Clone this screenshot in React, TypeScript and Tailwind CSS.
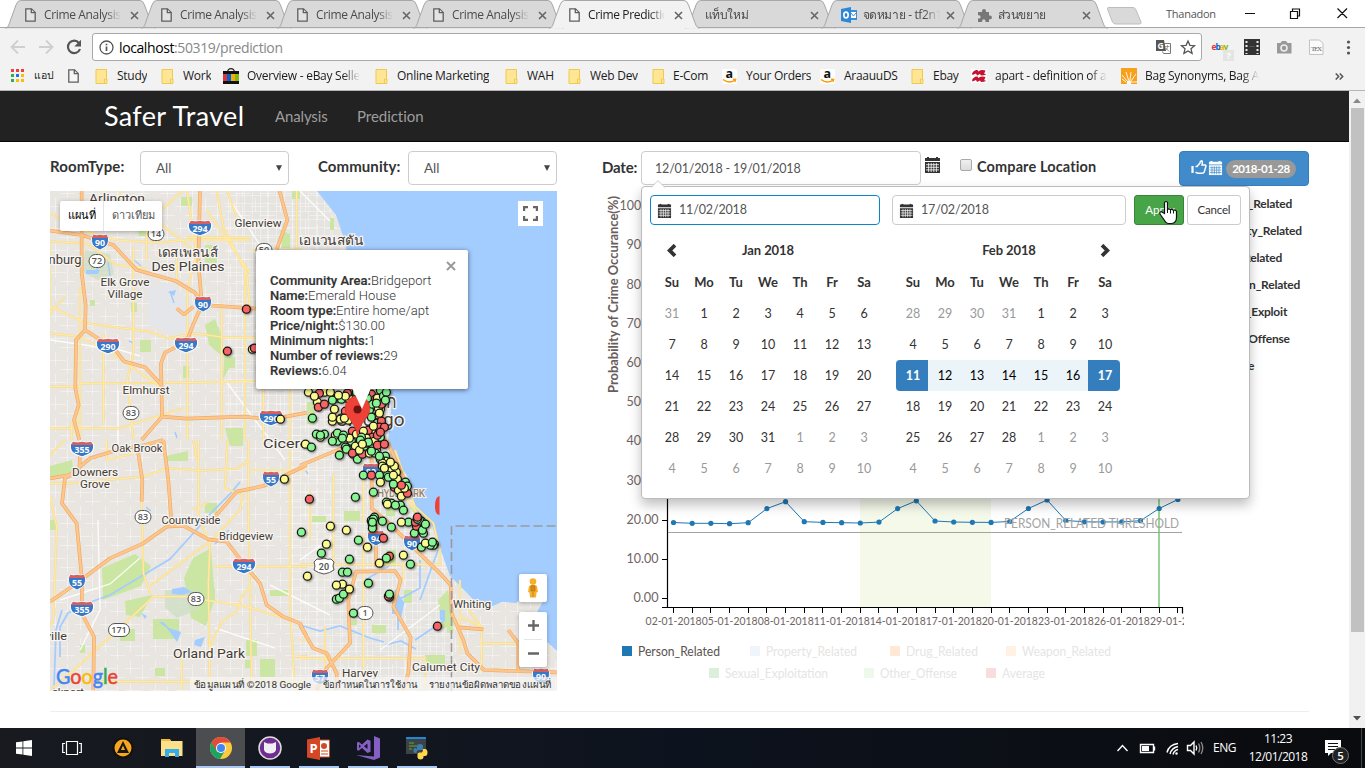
import React from "react";

/* ---------- small shared icons ---------- */

const PageIcon = ({ className = "" }: { className?: string }) => (
  <svg width="11" height="14" viewBox="0 0 11 14" className={className} fill="#fff" fillOpacity=".3" stroke="#5f5f5f" strokeWidth="1.3">
    <path d="M.8.8h5.7l3.7 3.7v8.7H.8z" />
    <path d="M6.3.8v3.9h3.9" />
  </svg>
);

const FolderIcon = () => (
  <svg width="13" height="15" viewBox="0 0 13 15" className="shrink-0">
    <path d="M1 .5h10.5v14H1z" fill="#ffe694" stroke="#f0c94e" />
    <path d="M9.5 10h2.5v4.5H9.5z" fill="#ffe694" stroke="#f0c94e" />
  </svg>
);

const AmazonIcon = () => (
  <svg width="15" height="15" viewBox="0 0 15 15" className="shrink-0">
    <rect width="15" height="15" rx="2" fill="#fff" />
    <text x="7.2" y="9.3" fontSize="12.5" fontWeight="700" textAnchor="middle" fontFamily="Open Sans, sans-serif" fill="#111">a</text>
    <path d="M1 10.5q6 4.5 11.5.8M11 10.2l2.6.2-.7 2.3" stroke="#f90" strokeWidth="1.5" fill="none" />
  </svg>
);

const CalIcon = ({ color = "#333" }: { color?: string }) => (
  <svg width="15" height="16" viewBox="0 0 15 16" className="shrink-0">
    <path fill={color} d="M0 1h2V0h2v1h7V0h2v1h2v3H0zM0 5h15v11H0z" />
    <path stroke={color === "#fff" ? "#428bca" : "#fff"} strokeWidth=".8" d="M1 7.7h13M1 10.3h13M1 12.9h13M3.6 6v9M6.2 6v9M8.8 6v9M11.4 6v9" />
  </svg>
);

/* ---------- browser chrome ---------- */

type Tab = { title: string; icon: "page" | "outlook" | "puzzle" | "none"; active?: boolean };
const tabs: Tab[] = [
  { title: "Crime Analysis", icon: "page" },
  { title: "Crime Analysis", icon: "page" },
  { title: "Crime Analysis", icon: "page" },
  { title: "Crime Analysis", icon: "page" },
  { title: "Crime Prediction", icon: "page", active: true },
  { title: "แท็บใหม่", icon: "none" },
  { title: "จดหมาย - tf2n1", icon: "outlook" },
  { title: "ส่วนขยาย", icon: "puzzle" },
];

const TabIcon = ({ icon }: { icon: Tab["icon"] }) => {
  if (icon === "page") return <PageIcon className="mr-[8px] shrink-0" />;
  if (icon === "outlook")
    return (
      <svg width="16" height="16" viewBox="0 0 16 16" className="mr-[6px] shrink-0">
        <path d="M8 3h8v10H8z" fill="#3a8fd6" />
        <path d="M10 5h5v6h-5z" fill="#fff" />
        <path d="M10 6l2.4 3L16 5" stroke="#3a8fd6" fill="none" />
        <path d="M0 2l10-2v16L0 14z" fill="#2b88d8" />
        <ellipse cx="5" cy="8" rx="2.2" ry="2.9" fill="none" stroke="#fff" strokeWidth="1.6" />
      </svg>
    );
  if (icon === "puzzle")
    return (
      <svg width="15" height="15" viewBox="0 0 15 15" className="mr-[6px] shrink-0">
        <path fill="#777" d="M1 4h4V3a2 2 0 1 1 4 0v1h3v3.500h1a1.900 1.900 0 1 1 0 3.800h-1V14H8.500v-1a1.700 1.700 0 1 0-3.400 0v1H1v-3.500h1a1.600 1.600 0 1 0 0-3.200H1z" />
      </svg>
    );
  return null;
};

const TabStrip = () => (
  <div className="relative flex h-[28px] shrink-0 border-b border-[#a7a7a7] bg-white pl-[5px]">
    {tabs.map((t, i) => (
      <div key={i} className={`relative -mr-[14px] flex h-[28px] w-[150px] shrink-0 items-center ${t.icon === "page" ? "pl-[20px]" : "pl-[19.500px]"} ${t.active ? "z-10" : ""}`}>
        <svg className="absolute left-0 top-0" width="151" height="29" viewBox="0 0 151 29">
          <path d="M.5 28.500C4 27 4 24 5.500 20L11 5Q12.500.5 15.500.5H135Q138 .5 139.500 5l5.500 15c1.500 4 2 7 5.500 8.500" fill={t.active ? "#f2f2f2" : "#d9d9d9"} stroke="#a7a7a7" />
          {!t.active && <path d="M0 27.500h151" stroke="#a7a7a7" />}
        </svg>
        <div className="relative flex h-full w-full items-center pt-[2px]">
          <TabIcon icon={t.icon} />
          <span className={`w-[77px] overflow-hidden whitespace-nowrap text-[12px] tracking-[-0.350px] [mask-image:linear-gradient(to_right,#000_80%,transparent)] ${t.active ? "text-[#222]" : "text-[#4c4c4c]"}`}>{t.title}</span>
          <svg className="absolute left-[105px] top-[11px]" width="9" height="9" viewBox="0 0 9 9">
            <path d="M1 1l7 7M8 1L1 8" stroke="#666" strokeWidth="1.600" />
          </svg>
        </div>
      </div>
    ))}
    <svg className="ml-[14px] mt-[7px]" width="36" height="18" viewBox="0 0 36 18">
      <path d="M1 .5h25q2 0 3 2.500l5 12q.5 2-1.500 2H9q-2.500 0-3.500-2L.8 3Q0 .5 1 .5z" fill="#d9d9d9" stroke="#bdbdbd" />
    </svg>
    <span className="absolute left-[1166px] top-[6px] text-[11px] leading-[16px] tracking-[-0.250px] text-[#555]">Thanadon</span>
    <svg className="absolute left-[1244px] top-[5px]" width="105" height="18" viewBox="0 0 105 18" fill="none" stroke="#111" strokeWidth="1.200">
      <path d="M1 8.500h10M46.500 6.500h7v7h-7zM48.500 6v-2h7v7h-2M93.500 3.500l9.500 9.500M103 3.500L93.500 13" />
    </svg>
  </div>
);

const Toolbar = () => (
  <div className="flex h-[38px] shrink-0 items-center bg-[#f2f2f2]">
    <svg width="92" height="38" viewBox="0 28 92 38" fill="none" strokeWidth="1.800">
      <path d="M25 47H12M18 40.500L11.500 47l6.500 6.500M39 47h13M46 40.500l6.500 6.500-6.500 6.500" stroke="#cfcfcf" />
      <path d="M79 43a6.200 6.200 0 1 0 1 6" stroke="#555" strokeWidth="2.200" />
      <path d="M81 39.800v6.700h-6.700z" fill="#555" />
    </svg>
    <div className="flex h-[28px] w-[1110px] items-center rounded-[3px] border border-[#a9a9a9] bg-white pl-[6px]">
      <svg width="15" height="15" viewBox="0 0 15 15" fill="none" stroke="#555" strokeWidth="1.300">
        <circle cx="7.500" cy="7.500" r="6.500" />
        <path d="M7.500 6.500v4.500M7.500 3.700v1.600" strokeWidth="1.700" />
      </svg>
      <span className="ml-[5px] text-[14px] tracking-[-0.400px] text-[#888]"><span className="text-black">localhost</span>:50319/prediction</span>
      <svg className="ml-auto" width="50" height="28" viewBox="1150 33 50 28">
        <path d="M1163.500 43.500h6v10h-7l-1-2" fill="#fff" stroke="#777" />
        <path d="M1164 46.500h4.500M1166.500 45v1.500q0 3-2.500 4.500M1165 48l3 3.500" stroke="#888" fill="none" strokeWidth=".8" />
        <path d="M1155 40h8l2 11h-10z" fill="#555" />
        <text x="1159.500" y="48.500" fontSize="8.500" fontWeight="700" textAnchor="middle" fill="#fff">G</text>
        <path d="M1187 41l1.900 4.300 4.600.4-3.500 3.100 1.100 4.600-4.100-2.500-4.100 2.500 1.100-4.600-3.500-3.100 4.600-.4z" fill="none" stroke="#555" strokeWidth="1.300" />
      </svg>
    </div>
    <svg width="163" height="38" viewBox="1202 28 163 38">
      <g fontFamily="Open Sans, sans-serif" fontWeight="700" fontSize="8.500">
        <text x="1211.500" y="50" fill="#e53238">e</text><text x="1215.500" y="50" fill="#0064d2">b</text><text x="1219.500" y="50" fill="#f5af02">a</text><text x="1223.500" y="50" fill="#86b817">y</text>
        <rect x="1223" y="50" width="11" height="11" fill="#e4e4e4" />
        <text x="1226.500" y="58.500" fill="#fff" fontSize="9">?</text>
      </g>
      <rect x="1244" y="39" width="16" height="16" fill="#333" />
      <path d="M1246.500 41v13M1257.500 41v13" stroke="#eee" strokeWidth="2" strokeDasharray="2 2" />
      <path d="M1249.500 46.500h5" stroke="#555" />
      <path d="M1277 43h3.500l1.500-2h4l1.500 2h4v10.500H1277z" fill="#999" />
      <circle cx="1284" cy="48" r="3" fill="none" stroke="#eee" strokeWidth="1.600" />
      <path d="M1309.500 40h10l3.500 3.500V54.500h-13.500z" fill="#fafafa" stroke="#c2c2c2" />
      <text x="1311" y="51" fontSize="7" fontFamily="Liberation Serif, serif" fill="#666" textLength="11">TEX</text>
      <g fill="#555"><circle cx="1348.500" cy="42" r="1.600" /><circle cx="1348.500" cy="47.500" r="1.600" /><circle cx="1348.500" cy="53" r="1.600" /></g>
    </svg>
  </div>
);

const Bookmark = ({ icon, label, width, fade }: { icon: React.ReactNode; label: string; width: string; fade?: boolean }) => (
  <div className={`flex shrink-0 items-center ${width}`}>
    <span className="flex w-[21px] shrink-0">{icon}</span>
    <span className={`overflow-hidden whitespace-nowrap text-[12px] tracking-[-0.270px] text-[#1c1c1c] ${fade ? "[mask-image:linear-gradient(to_right,#000_85%,transparent)]" : ""}`}>{label}</span>
  </div>
);

const Bookmarks = () => (
  <div className="flex h-[25px] shrink-0 items-center border-b border-[#b6b4b6] bg-[#f2f2f2] pb-[4px] pl-[11px]">
    <svg width="23" height="14" viewBox="0 0 23 14" className="shrink-0">
      <path fill="#ea4335" d="M0 0h3v3H0zM5 0h3v3H5zM10 0h3v3h-3z" />
      <path fill="#34a853" d="M0 5h3v3H0zM0 10h3v3H0z" /><path fill="#1a73e8" d="M5 5h3v3H5z" />
      <path fill="#fbbc05" d="M10 5h3v3h-3zM5 10h3v3H5zM10 10h3v3h-3z" />
    </svg>
    <span className="w-[34px] text-[10.500px] text-[#222]">แอป</span>
    <PageIcon className="mr-[16px]" />
    <Bookmark icon={<FolderIcon />} label="Study" width="w-[66px] [&>span:first-child]:w-[22px]" />
    <Bookmark icon={<FolderIcon />} label="Work" width="w-[62px] [&>span:first-child]:w-[22px]" />
    <Bookmark
      icon={<svg width="16" height="16" viewBox="0 0 16 16"><path d="M4.500 4Q5 .7 8 .7T11.500 4" fill="none" stroke="#222" strokeWidth="1.200" /><path d="M0 3h16v13H0z" fill="#111" /><path d="M0 6h4v7H0z" fill="#e53238" /><path d="M4 6h4v7H4z" fill="#0064d2" /><path d="M8 6h4v7H8z" fill="#f5af02" /><path d="M12 6h4v7h-4z" fill="#86b817" /></svg>}
      label="Overview - eBay Seller" width="w-[137px] [&>span:first-child]:w-[24px]" fade />
    <div className="w-[15px]" />
    <Bookmark icon={<FolderIcon />} label="Online Marketing" width="w-[130px] [&>span:first-child]:w-[22px]" />
    <Bookmark icon={<FolderIcon />} label="WAH" width="w-[63px] [&>span:first-child]:w-[22px]" />
    <Bookmark icon={<FolderIcon />} label="Web Dev" width="w-[84px] [&>span:first-child]:w-[22px]" />
    <Bookmark icon={<FolderIcon />} label="E-Com" width="w-[70px]" />
    <Bookmark icon={<AmazonIcon />} label="Your Orders" width="w-[98px] [&>span:first-child]:w-[24px]" />
    <Bookmark icon={<AmazonIcon />} label="AraauuDS" width="w-[91px] [&>span:first-child]:w-[24px]" />
    <Bookmark icon={<FolderIcon />} label="Ebay" width="w-[60px] [&>span:first-child]:w-[22px]" />
    <Bookmark
      icon={<svg width="16" height="14" viewBox="0 0 16 14"><rect width="16" height="14" fill="#fff" /><path d="M1 4.500Q3 .5 6.500 1l1 1.500Q10 .2 14.500 1.500l-1.500 3.500q1.500-.5 2 .5-1.500 1-5 1L9 5 6 6.500 5 4.500 1.500 6zM1 11Q3 7 6.500 7.500l1 1.500Q10 6.700 14.500 8l-1.500 3.500q1.500-.5 2 .5-1.500 1-5 1L9 11.500 6 13l-1-2-3.500 1.500z" fill="#c4122f" /></svg>}
      label="apart - definition of a word" width="w-[136px] [&>span:first-child]:w-[24px]" fade />
    <div className="w-[14px]" />
    <Bookmark
      icon={<svg width="16" height="16" viewBox="0 0 16 16"><rect width="16" height="16" fill="#f9a01b" /><path d="M6 13L1 7M7.500 12L5 4M9 12l1-8M10 13l5-7M10 14h6M5 14l-4-3" stroke="#fff" strokeWidth=".9" /><circle cx="8" cy="14.500" r="2.300" fill="#fff" /></svg>}
      label="Bag Synonyms, Bag Antonyms" width="w-[138px] [&>span:first-child]:w-[24px]" fade />
    <svg className="ml-auto mr-[21px]" width="9" height="7" viewBox="0 0 9 7" fill="none" stroke="#555" strokeWidth="1.500"><path d="M.7.5l3 3-3 3M4.700.5l3 3-3 3" /></svg>
  </div>
);

/* ---------- map ---------- */

const Interstate = ({ x, y, n }: { x: number; y: number; n: string }) => {
  const wide = n.length > 2;
  return (
    <g transform={`translate(${x} ${y})`}>
      <g transform={wide ? "scale(1.38 1)" : undefined}>
        <path d="M-6.500-7.500Q-3.500-6 0-7.500Q3.500-6 6.500-7.500L8.500-4Q9 3 4.500 5.500L0 8L-4.500 5.500Q-9 3-8.500-4Z" fill="#3878c7" stroke="#fff" strokeWidth=".9" />
        <path d="M-6.500-7.200Q-3.500-5.800 0-7.200Q3.500-5.800 6.500-7.200L8.200-4H-8.200Z" fill="#d75f5f" />
      </g>
      <text y="4.300" textAnchor="middle" fontSize="8.800" fontWeight="700" fill="#fff" fontFamily="Open Sans, sans-serif">{n}</text>
    </g>
  );
};

const RouteShield = ({ x, y, n }: { x: number; y: number; n: string }) => (
  <g transform={`translate(${x} ${y})`}>
    <rect x={n.length > 2 ? -10.5 : -8} y="-6.500" width={n.length > 2 ? 21 : 16} height="13" rx="6.500" fill="#fff" stroke="#555" />
    <text y="3.400" textAnchor="middle" fontSize="9" fontWeight="600" fill="#555" fontFamily="Open Sans, sans-serif">{n}</text>
  </g>
);

const interstates: [number, number, string][] = [
  [200, 228, "294"], [100, 242, "90"], [203, 304, "90"], [108, 346, "290"], [186, 345, "294"], [271, 418, "290"],
  [82, 449, "355"], [271, 479, "55"], [371, 471, "90"], [376, 538, "94"], [412, 543, "90"], [244, 566, "294"],
  [77, 582, "55"], [82, 609, "355"], [320, 677, "57"], [541, 676, "90"],
];
const routes: [number, number, string][] = [
  [97, 261, "72"], [156, 234, "14"], [264, 250, "50"], [131, 413, "83"], [143, 517, "83"], [196, 599, "83"], [119, 630, "171"], [365, 613, "1"],
];

const labels: [number, number, string, number, number?][] = [
  [117, 203, "Arlington", 13.5, 56], [258, 227, "Glenview", 11.5, 47], [188, 257, "เดสเพลนส์", 13, 60], [188, 271, "Des Plaines", 13.5, 73],
  [125, 286, "Elk Grove", 11.5, 49], [125, 298, "Village", 11.5, 35], [146, 394, "Elmhurst", 11.5, 47], [137, 452, "Oak Brook", 11.5, 51],
  [95, 476, "Downers", 11.5, 46], [95, 488, "Grove", 11.5, 30], [191, 524, "Countryside", 11.5, 59], [246, 540, "Bridgeview", 11.5, 54],
  [209, 658, "Orland Park", 13.5, 72], [56, 640, "ville", 11.5, 22], [65, 264, "nburg", 13.5, 33], [286, 448, "Cicero", 13.5, 46],
  [331, 245, "เอแวนสตัน", 13, 64], [332, 259, "Evanston", 13.5, 60], [472, 608, "Whiting", 11.5, 38], [360, 677, "Harvey", 11.5, 36], [446, 671, "Calumet City", 11.5, 68],
  [68, 696, "ckport", 11.5, 32], [370, 426, "Chicago", 18, 69], [370, 408, "ชิคาโก", 19, 54],
];

/* Listing markers, one string per colour, "x,y" pairs */
const G = "311,447 337,441 339,455 353,449 353,454 357,459 371,451 379,456 380,459 363,475 379,475 387,475 388,477 405,482 393,484 373,492 355,497 386,502 391,503 395,505 400,505 403,510 301,532 373,519 372,525 372,528 382,521 391,527 408,522 419,520 417,522 425,524 414,533 423,533 358,540 321,553 349,559 386,558 410,564 421,547 430,545 433,545 434,544 342,572 347,572 368,583 343,594 339,598 336,599 353,613 389,594 312,418 332,400 337,398 341,399 380,390 383,396 376,403 371,417 377,423 380,437 316,434 320,435 324,434 337,433 343,435 342,438 332,441 346,449 351,441 364,446 368,442 361,437 373,446 375,453 366,447 345,447 386,392 360,440 385,456 407,486 371,520 422,530 372,522 374,517 417,519 421,521 432,542 385,400 365,392 356,392 369,410 372,404 367,398";
const Y = "305,444 362,444 374,441 369,453 382,463 382,466 384,468 390,462 394,466 396,472 393,475 397,479 380,482 405,486 404,488 398,490 401,496 387,504 330,526 346,530 371,521 401,522 326,544 367,547 403,555 379,563 425,543 307,576 336,585 342,584 349,589 252,349 280,419 284,479 308,392 317,402 349,399 334,409 332,417 332,421 340,419 344,418 348,420 324,392 330,392 378,408 379,413 320,437 335,435 363,431 366,438 377,398 382,403 371,430 349,438 355,446 376,449 385,461 388,466 389,471 393,480 356,434 380,409 345,396 314,396 338,395 373,426 359,450";
const R = "362,454 371,475 394,487 401,485 407,493 309,499 417,517 415,522 416,526 383,538 389,556 388,596 437,626 246,309 227,351 254,348 318,407 324,404 347,393 352,390 381,404 381,421 384,427 379,427 377,435 372,437 352,431 371,394 375,399 378,415 345,411 366,443 384,444 368,430 389,597 319,393 364,396 380,432 352,453 377,445";
const parse = (s: string) => s.split(" ").map((p) => p.split(",").map(Number));
const dots = [
  ...parse(G).map((p) => ({ p, c: "#88f593" })),
  ...parse(Y).map((p) => ({ p, c: "#fbfb90" })),
  ...parse(R).map((p) => ({ p, c: "#fa6464" })),
].sort((a, b) => ((a.p[0] * 7 + a.p[1] * 13) % 31) - ((b.p[0] * 7 + b.p[1] * 13) % 31));

const Roads = ({ kind }: { kind: "yellow" | "orange" }) => {
  const nw = kind === "yellow"
    ? "M0 70L90 120L200 150L320 158L410 150H600M0 155L110 160L200 225L290 235M0 350L110 400L300 425L350 445L440 430L520 442H770M0 430L90 440L200 500L330 590M90 580L420 578L620 573H770M0 715H210L400 655M250 170V490L232 570L250 750M410 0L440 190L412 300V750M515 340V750M585 220V750M640 250V750M0 165V380M110 110L290 100L400 0M470 60L600 250M290 210V80M500 0L520 110L590 250L600 350M530 0L560 80M160 0L230 100M410 143H600M600 180H770M45 320L0 370M65 750V700L90 690M90 290V750M720 580V750M0 590H90M160 430V700M330 100L430 180M210 0V60M740 0V250M380 270V180"
    : "M0 122L95 135L190 165L260 240L375 272L435 308L460 345L620 356L770 380M95 0V250L107 345L105 420L195 478L222 514L285 532L335 585M105 420L78 450L76 595L86 645L72 690L88 750M450 0L445 220L456 345L430 402L410 455L345 488L333 520L336 680L275 750M336 680L410 686L580 680L665 688L770 668M688 0L712 90L680 178M380 355L402 373L430 350";
  const sw = kind === "yellow"
    ? "M0 45L45 0M0 130H60L280 110L350 85L450 92L560 86L600 60M275 180L280 400L302 465M300 440L350 400L480 305L570 210L578 165L525 145L532 0M445 0V230L470 290M470 190L430 210M595 0V230L600 440L605 750M480 305L475 430L480 750M490 380H770M310 470H420M465 480L560 495L610 505L735 545M605 435L575 470L560 515L515 545L480 620M310 470L230 545L60 700L0 750M130 725H770M395 650V750M720 0V500L735 750M0 170L20 260L10 540L0 560M170 0V60L250 40M735 650H770M440 60L430 0M600 90H770"
    : "M0 115L60 105L120 55L230 22L265 20L340 0M90 40L88 90L45 115L36 190L80 250L96 420L95 520L132 590L130 750M0 485L80 430L180 355L280 310L350 260L400 257L475 298L530 305L580 370L630 430L650 495L700 530L750 550L770 590M262 20L277 120L275 185M340 0L355 120L365 258M495 230L560 155L640 138L770 75";
  const se = kind === "yellow"
    ? "M0 373H425M0 655H375M190 280V720M445 690H545V560L480 530M550 610H655M310 370V420M480 420V640M500 500L550 570M0 600H20M285 30L345 200L400 250L420 330V370M260 100L360 230M75 560V750M375 650V750M190 100V250M100 100V370M30 150V300"
    : "M0 77L160 10L260 0M200 0L215 60V205L262 245L340 322L420 400L452 435L455 520L490 600L502 640L552 690L770 697M228 250V380M0 555L40 625L80 640L110 700V750M50 750L80 685L150 610L145 480L168 395L285 393L302 420L280 500L332 592L325 700L308 750M478 562L550 568M625 570L655 610V697M260 0L300 90L328 150";
  const casing = kind === "yellow" ? "#f5d98c" : "#eeab66";
  const core = kind === "yellow" ? "#ffeaa6" : "#ffc68c";
  return (
    <g fill="none" strokeLinejoin="round">
      {[[casing, kind === "yellow" ? 6.5 : 11], [core, kind === "yellow" ? 4 : 7]].map(([c, w]) => (
        <g key={c} stroke={c as string} strokeWidth={w}>
          <path transform="translate(50 190) scale(.33333)" d={nw} />
          <path transform="translate(50 440) scale(.33333)" d={sw} />
          <path transform="translate(300 440) scale(.33333)" d={se} />
        </g>
      ))}
    </g>
  );
};

const CityMap = () => (
  <svg width="507" height="500" viewBox="50 191 507 500" className="block" fontFamily="Roboto, sans-serif">
    <defs>
      <pattern id="minor" width="25" height="22" patternUnits="userSpaceOnUse">
        <path d="M0 8.500h16M5.500 0v14M17.500 4v18M10 17.500h15" stroke="#fff" strokeOpacity=".42" fill="none" />
      </pattern>
      <pattern id="blocks" width="8" height="8" patternUnits="userSpaceOnUse">
        <path d="M0 3.500h8M4.500 0v8" stroke="#fff" strokeOpacity=".32" fill="none" />
      </pattern>
      <filter id="soft" x="-50%" y="-50%" width="200%" height="200%"><feDropShadow dx="1" dy="1" stdDeviation="1" floodOpacity=".45" /></filter>
    </defs>
    <rect x="50" y="191" width="507" height="500" fill="#e9e6e1" />
    <path d="M240 191h80l70 190 30 150 30 60v100H330V440H240z" fill="#e6e4e0" />
    <rect x="50" y="191" width="507" height="500" fill="url(#minor)" />
    <path d="M225 191h100l80 250 50 150v100H290V420h-65z" fill="url(#blocks)" />
    {/* parks */}
    <g fill="#cbe6a3">
      <path d="M205 325l10-6 8 20v18l-14-12zM205 245h12v18h-12zM181 197h11v9h-11zM137 224l10-2v14h-8zM225 428h18v18h-13zM166 456l22-5v10h-20zM50 466l22-6 2 15-24 4z" />
      <path d="M102 568l33-14 16 12-10 20-38 14zM193 558l18-10 4 50-9 28-15-8-7-40zM125 601l27-6-12 22-14-2zM153 619h26v20h-26zM120 629h15v12h-15zM190 588h25v14h-25zM205 503h12v10h-12z" />
      <path d="M260 659h15v18h-15zM246 640h11v16h-11zM270 590h18v6h-18zM225 345l6 20-8 14zM312 516h14v6h-14zM344 511h16v10h-16zM372 625h14v8h-14zM447 605h6v28h-6zM386 550h10v16h-10zM386 502h9v14h-9zM404 590h8v13h-8zM438 600l10-10 6 35-12 4zM425 655h20v12h-20zM155 668h10v8h-10zM80 645h5v8h-5zM245 660h6v8h-6zM50 520h6v10h-6z" />
      <path d="M307 402h8v22h-8zM372 393l10 6v14l-7-4zM408 505l16 7 8 10-12-1zM226 357h9v11h-9zM270 378h12v6h-12zM350 620h7v5h-7z" />
      <path d="M292 191h8v8h-8zM330 218h4v12h-4zM280 230l10 4v14h-8zM140 340h11v12h-11zM183 366h6v12h-6zM131 303h6v9h-6zM90 300h5v6h-5z" />
    </g>
    <path d="M149 287l22-4 22 20-3 22-9 10-32-10z" fill="#e5e6ea" />
    <path d="M85 250l25 4 4 20-16 6-16-8zM165 590h32v20l-20 8-12-10z" fill="#cfdfc4" opacity=".8" />
    {/* water */}
    <path d="M317 191L336 215L343 236L350 262L386 350L392 400L388 440L398 463L410 480L415 512L430 520L440 548L450 576L467 593L483 610L502 602L516 603L530 592L545 598L537 612L545 640L557 651V191Z" fill="#a3ccff" />
    <g fill="#a3ccff">
      <path d="M172 589l12-2 8 5-10 3-10-1zM195 640l10-3-4 10-7-2zM86 270h14l-2 4H86zM163 622l6 6 12 4-4 10-10-14-8-6zM141 613l6 3-2 3zM122 294l4-2 2 4zM168 292l8-2-2 6zM392 602h5v12h-5zM395 590l9 14-3 14-5-10zM440 610h5v10h-5z" />
    </g>
    <path d="M240 482l-10 12-18 18-22 25-20 22-30 18-30 18-22 8-20 10-8 14v30M300 625l20 6 20-5 30 12 14 4M420 560v28l-22 12v30M395 590l9 14M438 550l-18 50M365 580l24-14M385 645l16-4 15 8M445 620l-30 20M62 610l-6 20-2 60" fill="none" stroke="#a3ccff" strokeWidth="1.800" />
    <path d="M95 274l4-8M108 262l2 14M174 303l-4-12M134 260l7 6M175 432l2 6M305 470l3 4M300 344l-4 8M129 341l4 2M146 507l5 4M229 530l-14 14" fill="none" stroke="#a3ccff" strokeWidth="1.500" />
    {/* secondary white streets */}
    <path d="M60 600l50-16 30-26M98 520l2 90-20 40M50 340l70 10 20 6M225 380l60 80M300 560l35-25M255 330l50 60M270 585l60 30M230 200l40 60M118 390v60M300 191l30 30M215 628l60 20M380 650l60-45" stroke="#fff" strokeOpacity=".85" strokeWidth="1.400" fill="none" />
    <Roads kind="yellow" />
    <Roads kind="orange" />
    <path d="M451.500 691V526H557" fill="none" stroke="#9a9a9a" strokeWidth="1.600" strokeDasharray="9 4" />
    {/* shields */}
    {interstates.map(([x, y, n]) => <Interstate key={`${n}${x}`} x={x} y={y} n={n} />)}
    {routes.map(([x, y, n]) => <RouteShield key={`${n}${x}`} x={x} y={y} n={n} />)}
    <path d="M317 559q3 1 7-1 4 2 7 1l3 3q-2 4 0 8-4 3-10 4-6-1-10-4 2-4 0-8z" fill="#fff" stroke="#555" />
    <text x="324" y="569.500" textAnchor="middle" fontSize="9" fontWeight="600" fill="#555">20</text>
    {labels.map(([x, y, s, size, len], i) => (
      <text key={i} x={x} y={y} textAnchor="middle" fontSize={size} textLength={len} lengthAdjust="spacingAndGlyphs" fill="#443c37" stroke="#f7f5f2" strokeWidth="2.500" strokeLinejoin="round" paintOrder="stroke">{s}</text>
    ))}
    <text x="401" y="496.500" textAnchor="middle" fontSize="10" fontWeight="500" textLength="48" fill="#9a8471" stroke="#f4f1ec" strokeWidth="2" paintOrder="stroke">HYDE PARK</text>
    {/* markers */}
    <path d="M439.500 496q-4.500 1-4.500 10t4.500 9z" fill="#ee4035" />
    <g filter="url(#soft)">
      {dots.map(({ p, c }, i) => <circle key={i} cx={p[0] + 0.4} cy={p[1] + 0.2} r="4" fill={c} stroke="#151515" strokeWidth="1.300" />)}
    </g>
    <path d="M357.500 437c-1.500-9-4-13-8-18-9-10-3-23 8-23s17 13 8 23c-4 5-6.500 9-8 18z" fill="#ee4238" stroke="#c5322b" strokeWidth=".6" />
    <circle cx="357.500" cy="409.500" r="4" fill="#6d1310" />
    {/* attribution */}
    <path d="M190 677h367v14H190z" fill="#f5f5f5" fillOpacity=".72" />
    <g fontSize="9.500" fill="#333" fontFamily="Roboto, Open Sans, sans-serif">
      <text x="194" y="687.500" textLength="117" lengthAdjust="spacingAndGlyphs">ข้อมูลแผนที่ ©2018 Google</text>
      <text x="323" y="687.500" textLength="94" lengthAdjust="spacingAndGlyphs">ข้อกำหนดในการใช้งาน</text>
      <text x="429" y="687.500" textLength="122" lengthAdjust="spacingAndGlyphs">รายงานข้อผิดพลาดของแผนที่</text>
    </g>
    <text x="56" y="684" fontSize="20.500" fontFamily="Lato, sans-serif" textLength="62" lengthAdjust="spacingAndGlyphs">
      <tspan fill="#4285f4" stroke="#4285f4" strokeWidth=".5">G</tspan><tspan fill="#ea4335" stroke="#ea4335" strokeWidth=".5">o</tspan><tspan fill="#fbbc05" stroke="#fbbc05" strokeWidth=".5">o</tspan><tspan fill="#4285f4" stroke="#4285f4" strokeWidth=".5">g</tspan><tspan fill="#34a853" stroke="#34a853" strokeWidth=".5">l</tspan><tspan fill="#ea4335" stroke="#ea4335" strokeWidth=".5">e</tspan>
    </text>
  </svg>
);

const infoRows = [
  ["Community Area:", "Bridgeport"], ["Name:", "Emerald House"], ["Room type:", "Entire home/apt"], ["Price/night:", "$130.00"],
  ["Minimum nights:", "1"], ["Number of reviews:", "29"], ["Reviews:", "6.04"],
];

const MapPanel = () => (
  <div className="relative h-[500px] w-[507px] overflow-hidden font-['Roboto',sans-serif]">
    <CityMap />
    <div className="absolute left-[10px] top-[10px] flex h-[30px] rounded-[2px] bg-white text-[11px] leading-[30px] shadow-[0_1px_4px_rgba(0,0,0,0.3)]">
      <span className="w-[44px] border-r border-[#e5e5e5] text-center font-medium text-black">แผนที่</span>
      <span className="w-[58px] text-center text-[#565656]">ดาวเทียม</span>
    </div>
    <div className="absolute left-[468px] top-[10px] flex h-[25px] w-[25px] items-center justify-center bg-white">
      <svg width="15" height="15" viewBox="0 0 15 15" fill="none" stroke="#666" strokeWidth="2.200"><path d="M1.100 5V1.100H5M10 1.100h3.900V5M13.900 10v3.900H10M5 13.900H1.100V10" /></svg>
    </div>
    <div className="absolute left-[469px] top-[383px] flex h-[28px] w-[28px] items-center justify-center rounded-[2px] bg-white shadow-[0_1px_4px_rgba(0,0,0,0.3)]">
      <svg width="12" height="20" viewBox="0 0 12 20"><circle cx="6" cy="3.500" r="3.300" fill="#f5b02e" /><path d="M2 8q4-3 8 0l1 6-1.500.5-.5 5H3l-.5-5L1 14z" fill="#f5b02e" /><path d="M4 8q2-1 4 0v5H4zM6 14v5" fill="#d98a16" stroke="#b9710c" strokeWidth=".7" /></svg>
    </div>
    <div className="absolute left-[469px] top-[421px] flex h-[55px] w-[28px] flex-col items-center rounded-[2px] bg-white shadow-[0_1px_4px_rgba(0,0,0,0.3)]">
      <svg width="28" height="55" viewBox="0 0 28 55"><path d="M9 13.500h11M14.500 8v11M9 41.500h11" stroke="#666" strokeWidth="2.300" /><path d="M5 27.500h18" stroke="#e6e6e6" /></svg>
    </div>
    <div className="absolute left-[206px] top-[59px] h-[139px] w-[212px] rounded-[2px] bg-white pl-[14px] pt-[23px] text-[13px] leading-[15px] text-[#333] shadow-[0_1px_5px_rgba(0,0,0,0.55)]">
      {infoRows.map(([k, v]) => (
        <div key={k} className="whitespace-nowrap"><b className="font-medium tracking-[0.020px] [-webkit-text-stroke:0.200px_#333]">{k}</b><span className="font-light tracking-[0.080px]">{v}</span></div>
      ))}
      <svg className="absolute left-[190px] top-[11px]" width="10" height="10" viewBox="0 0 10 10"><path d="M1 1l8 8M9 1L1 9" stroke="#999" strokeWidth="1.900" /></svg>
      <svg className="absolute left-[95px] top-[138px]" width="24" height="22" viewBox="0 0 24 22"><path d="M1 0h19l-9 21z" fill="#fff" /></svg>
    </div>
  </div>
);

/* ---------- chart ---------- */

const ys = [522.5, 523.3, 523.3, 523.7, 522.7, 508.6, 501.7, 521.7, 522.4, 522.7, 523, 522.1, 508.6, 500.8, 521, 522, 522.3, 522.4, 521.5, 508.5, 500, 520.5, 521.8, 522, 521.9, 520.7, 508.5, 499.5];
const pts = ys.map((y, i) => [673.5 + i * 18.68, y]);
const xLabels = ["02-01-2018", "05-01-2018", "08-01-2018", "11-01-2018", "14-01-2018", "17-01-2018", "20-01-2018", "23-01-2018", "26-01-2018", "29-01-2018"];
const chartLegend: [number, number, string, string, number][] = [
  [622, 646, "Person_Related", "#1f77b4", 82], [750, 646, "Property_Related", "#f0f4fb", 91], [890, 646, "Drug_Related", "#ffe8d6", 72], [1006, 646, "Weapon_Related", "#fff1e4", 89],
  [709, 668, "Sexual_Exploitation", "#dcefdc", 103], [864, 668, "Other_Offense", "#eef9ec", 77], [986, 668, "Average", "#f9dcdd", 43],
];

const Chart = () => (
  <svg width="582" height="500" viewBox="602 191 582 500" className="block shrink-0" fontFamily="Lato, sans-serif">
    <path d="M860 206h131v401H860z" fill="#f5f9ea" />
    <text transform="translate(617.500 393) rotate(-90)" fontSize="12.500" fontWeight="700" fill="#6a5d5a" textLength="197" lengthAdjust="spacingAndGlyphs">Probability of Crime Occurance(%)</text>
    <g fontSize="12.500" fill="#6e6463">
      {Array.from({ length: 11 }, (_, i) => (
        <text key={i} x="658.500" y={602.3 - i * 39.22} textAnchor="end" textLength={i === 0 ? 25 : i === 10 ? 39 : 32} lengthAdjust="spacingAndGlyphs">{(i * 10).toFixed(2)}</text>
      ))}
    </g>
    <path d="M662 206.500h5.500V607.500H662M662 598.500h5M662 559.500h5M662 520.500h5M667 607.500h515.500v6" fill="none" stroke="#000" strokeWidth="1.200" />
    {pts.map(([x], i) => <path key={i} d={`M${Math.floor(x)}.5 608v5`} stroke="#000" />)}
    <g fontSize="11" fill="#6e6463">
      {xLabels.map((l, i) => <text key={l} x={645.6 + i * 56.04} y="625" textLength="56" lengthAdjust="spacingAndGlyphs">{l}</text>)}
    </g>
    <path d="M1159 206v401" stroke="#98d698" strokeWidth="2" />
    <polyline points={pts.map((p) => p.join(",")).join(" ")} fill="none" stroke="#1f77b4" />
    {pts.map(([x, y], i) => <circle key={i} cx={x} cy={y} r="2.600" fill="#1f77b4" />)}
    <path d="M668 532.500h514" stroke="#a3a3a3" />
    <text x="1004" y="528" fontSize="12.500" fill="#a3a3a3" textLength="175" lengthAdjust="spacingAndGlyphs">PERSON_RELATED THRESHOLD</text>
    {chartLegend.map(([x, y, s, c, w], i) => (
      <g key={s}>
        <rect x={x} y={y} width="10" height="10" fill={c} />
        <text x={x + 16} y={y + 10} fontSize="12.500" fill={i === 0 ? "#5b5250" : "#e6e4e4"} textLength={w} lengthAdjust="spacingAndGlyphs">{s}</text>
      </g>
    ))}
  </svg>
);

/* ---------- date range picker ---------- */

const janCells = [31, ...Array.from({ length: 31 }, (_, i) => i + 1), ...Array.from({ length: 10 }, (_, i) => i + 1)];
const febCells = [28, 29, 30, 31, ...Array.from({ length: 28 }, (_, i) => i + 1), ...Array.from({ length: 10 }, (_, i) => i + 1)];

const Month = ({ title, cells, lead, days, arrow, range }: { title: string; cells: number[]; lead: number; days: number; arrow: "left" | "right"; range?: [number, number] }) => (
  <div className={`grid w-[224px] grid-cols-7 text-center text-[12.500px] text-[#333] ${arrow === "right" ? "[text-indent:2px]" : ""}`}>
    <div className="col-span-7 flex h-[33px] items-center justify-center text-[13px] font-bold tracking-[-0.100px]">
      <svg className={`${arrow === "left" ? "mr-auto" : "invisible mr-auto"} translate-x-[10px]`} width="11" height="13" viewBox="0 0 11 13"><path d="M9 1.200L3.700 6.500 9 11.800" fill="none" stroke="#333" strokeWidth="3.800" /></svg>
      <span>{title}</span>
      <svg className={`${arrow === "right" ? "ml-auto" : "invisible ml-auto"} -translate-x-[9px]`} width="11" height="13" viewBox="0 0 11 13"><path d="M2 1.200l5.300 5.300L2 11.800" fill="none" stroke="#333" strokeWidth="3.800" /></svg>
    </div>
    {["Su", "Mo", "Tu", "We", "Th", "Fr", "Sa"].map((d) => <div key={d} className="h-[31px] text-[13px] font-bold leading-[31px]">{d}</div>)}
    {cells.map((d, i) => {
      const inside = i >= lead && i < lead + days;
      const edge = inside && range && (d === range[0] || d === range[1]);
      const mid = inside && range && d > range[0] && d < range[1];
      return (
        <div key={i} className={`h-[31px] leading-[31px] ${!inside ? "text-[#999]" : edge ? `bg-[#357ebd] font-bold text-white ${d === range![0] ? "rounded-l-[4px]" : "rounded-r-[4px]"}` : mid ? "bg-[#ebf4f8] text-black" : ""}`}>{d}</div>
      );
    })}
  </div>
);

const DatePicker = () => (
  <div className="absolute left-[641px] top-[95px] z-20 h-[313px] w-[609px] rounded-[4px] border border-[#bcbcbc] bg-white pl-[8px] pt-[8px] font-['Lato',sans-serif] shadow-[0_6px_12px_rgba(0,0,0,0.25)]">
    <svg className="absolute left-[8px] top-[-7px]" width="16" height="8" viewBox="0 0 16 8"><path d="M1 7.500L8 .7l7 6.800" fill="#fff" stroke="#ccc" /></svg>
    <div className="flex h-[30px] items-center text-[12.500px] text-[#555]">
      <div className="flex h-[30px] w-[230px] items-center rounded-[4px] border border-[#0a86c8] pl-[6px]"><div className="scale-90 pt-[2px]"><CalIcon /></div><span className="ml-[7px] tracking-[-0.150px]">11/02/2018</span></div>
      <div className="ml-[12px] flex h-[30px] w-[234px] items-center rounded-[4px] border border-[#ccc] pl-[6px]"><div className="scale-90 pt-[2px]"><CalIcon /></div><span className="ml-[7px] tracking-[-0.150px]">17/02/2018</span></div>
      <button className="ml-[8px] h-[30px] w-[50px] rounded-[3px] border border-[#398439] bg-[#47a447] pl-[2px] text-[11.500px] text-white">Apply</button>
      <button className="ml-[3px] h-[30px] w-[54px] rounded-[3px] border border-[#ccc] bg-white text-[11.500px] tracking-[-0.200px] text-[#333]">Cancel</button>
    </div>
    <div className="flex pl-[6px] pt-[9px]">
      <Month title="Jan 2018" cells={janCells} lead={1} days={31} arrow="left" />
      <div className="w-[16px]" />
      <Month title="Feb 2018" cells={febCells} lead={4} days={28} arrow="right" range={[11, 17]} />
    </div>
    <svg className="absolute left-[516px] top-[13px]" width="20" height="25" viewBox="0 0 20 25">
      <path d="M6.500 2.500q1.500-2 3 0v7q1.500-1.200 3 .3 1.500-1 3 .5 2-.8 3 1v6q0 6-5 6.200H10q-2 0-3.500-3L2 14q-.5-2 1-2.500l3.500 2z" fill="#fff" stroke="#111" strokeWidth="1.200" />
      <path d="M9.500 9v4M12.500 10v3.500M15.500 10.500v3" stroke="#111" />
    </svg>
  </div>
);

/* ---------- page ---------- */

const SelectBox = () => (
  <div className="flex h-[34px] w-[149px] items-center rounded-[4px] border border-[#ccc] pl-[15px] pr-[6px] text-[13.500px] text-[#555]">
    All
    <svg className="ml-auto" width="6" height="6" viewBox="0 0 6 6"><path d="M0 .2h6L3 6z" fill="#444" /></svg>
  </div>
);

const crimeTypes = ["Person_Related", "Property_Related", "Drug_Related", "Weapon_Related", "Sexual_Exploit", "Other_Offense", "Average"];

const Page = () => (
  <div className="relative flex h-[637px] shrink-0 bg-white font-['Lato',sans-serif]">
    <div className="w-[1349px]">
      <nav className="flex h-[51px] items-center border-b border-[#080808] bg-[#222] pl-[104px] text-[#9d9d9d]">
        <span className="w-[171px] text-[27px] tracking-[0.350px] text-white">Safer Travel</span>
        <span className="w-[82px] text-[15px] tracking-[-0.150px]">Analysis</span>
        <span className="text-[15px] tracking-[-0.050px]">Prediction</span>
      </nav>
      <div className="flex pl-[50px] pt-[9px]">
        <section className="w-[507px]">
          <div className="flex h-[40px] items-start text-[15px] font-bold text-[#333]">
            <span className="w-[90px] pt-[4px] tracking-[0.150px]">RoomType:</span>
            <div className="font-normal"><SelectBox /></div>
            <span className="ml-[29px] w-[90px] pt-[4px] tracking-[0.080px]">Community:</span>
            <div className="font-normal"><SelectBox /></div>
          </div>
          <MapPanel />
        </section>
        <section className="ml-[45px] w-[707px]">
          <div className="flex h-[40px] items-start text-[15px] font-bold text-[#333]">
            <span className="w-[39px] pt-[5px] tracking-[-0.200px]">Date:</span>
            <div className="flex h-[34px] w-[280px] items-center rounded-[4px] border border-[#ccc] pl-[13px] pt-[2px] text-[12.500px] font-normal tracking-[-0.180px] text-[#555]">12/01/2018 - 19/01/2018</div>
            <div className="ml-[4px] mt-[6px]"><CalIcon /></div>
            <div className="ml-[20px] mt-[8px] h-[12px] w-[12px] rounded-[2px] border border-[#a9a9a9] bg-gradient-to-b from-[#f0f0f0] to-[#dcdcdc]" />
            <span className="ml-[5px] pt-[5px] text-[14.500px] tracking-[0.120px]">Compare Location</span>
            <div className="ml-auto flex h-[35px] w-[130px] items-center rounded-[4px] border border-[#357ebd] bg-[#428bca] pl-[11px]">
              <svg width="16" height="15" viewBox="0 0 16 15" className="-mt-[3px] mr-[1px]" fill="none" stroke="#fff" strokeWidth="1.500"><path d="M1.500 6v7" strokeWidth="2.200" /><path d="M4.500 6.500h1.500L9 3q0-2 1.500-2.200Q12 1 11 5h3.200q1.200.5.5 2l-1.500 5q-.5 1.200-2 1.200H7l-2.500-1" /></svg>
              <div className="-mt-[2px] scale-90"><CalIcon color="#fff" /></div>
              <span className="ml-[3px] h-[18px] w-[70px] rounded-full bg-[#999] text-center text-[11.500px] leading-[17px] tracking-[-0.420px] text-white">2018-01-28</span>
            </div>
          </div>
          <div className="flex">
            <Chart />
            <ul className="-mt-px pl-[28px] text-[12px] font-bold text-[#333]">
              {crimeTypes.map((c) => <li key={c} className="h-[27px] leading-[27px] tracking-[-0.200px]">{c}</li>)}
            </ul>
          </div>
        </section>
      </div>
      <div className="ml-[50px] mt-[20px] w-[1259px] border-t border-[#eee]" />
    </div>
    <div className="flex w-[16px] flex-col items-center justify-between bg-[#f1f1f1] py-[6px]">
      <svg width="16" height="540" viewBox="0 0 16 540"><path d="M4 6l4-4.500L12 6z" fill="#888" /><path d="M2 11h13v524H2z" fill="#c1c1c1" /></svg>
      <svg width="16" height="10" viewBox="0 0 16 10"><path d="M4 4h8L8 8.500z" fill="#505050" /></svg>
    </div>
    <DatePicker />
  </div>
);

/* ---------- taskbar ---------- */

const TaskSlot = ({ children, active, open }: { children: React.ReactNode; active?: boolean; open?: boolean }) => (
  <div className={`relative flex h-[40px] w-[49px] items-center justify-center ${active ? "bg-[#4b4d51]" : ""}`}>
    {children}
    {(open || active) && <div className={`absolute bottom-0 h-[2px] bg-[#a8c8f5] ${active ? "w-[49px]" : "w-[40px]"}`} />}
  </div>
);

const Taskbar = () => (
  <div className="flex h-[40px] shrink-0 items-center bg-gradient-to-r from-[#181a20] via-[#0d131e] to-[#0a0b0e] text-white">
    <TaskSlot><svg className="-translate-x-[1px]" width="16" height="16" viewBox="0 0 16 16" fill="#fff"><path d="M0 2.300L6.500 1.400v6.200H0zM7.300 1.300L16 0v7.600H7.300zM0 8.400h6.500v6.200L0 13.700zM7.300 8.400H16V16l-8.700-1.300z" /></svg></TaskSlot>
    <TaskSlot><svg className="-translate-x-[2px]" width="20" height="16" viewBox="0 0 20 16" fill="none" stroke="#fff" strokeWidth="1.200"><path d="M4.500 1.500h11v13h-11zM3 3.500H.7v9H3M17 3.500h2.300v9H17" /></svg></TaskSlot>
    <TaskSlot><svg width="22" height="22" viewBox="0 0 22 22"><circle cx="11" cy="11" r="10.500" fill="#15110a" /><circle cx="11" cy="11" r="8.500" fill="#f5a623" /><path d="M11 4l6 12H5z" fill="#1a1710" /><path d="M11 8.500l2 4.500H9z" fill="#f5a623" /></svg></TaskSlot>
    <TaskSlot><svg width="22" height="18" viewBox="0 0 22 18"><path d="M0 0h9l1 2h11.500v15H0z" fill="#ffe08a" /><path d="M0 0h9v2H0z" fill="#f0bb3a" /><path d="M4 10h14v8h-4v-4H8v4H4z" fill="#33aeea" /></svg></TaskSlot>
    <TaskSlot active>
      <svg width="22" height="22" viewBox="0 0 22 22"><circle cx="11" cy="11" r="11" fill="#fcca3f" /><path d="M1.500 5.500A11 11 0 0 1 20.500 5.500H11L6 14z" fill="#e24b3a" /><path d="M1.500 5.500A11 11 0 0 0 10 22l5-8.500-8 1z" fill="#1da362" /><circle cx="11" cy="11" r="5" fill="#fff" /><circle cx="11" cy="11" r="4" fill="#4285f4" /></svg>
    </TaskSlot>
    <TaskSlot open><svg width="24" height="24" viewBox="0 0 24 24"><circle cx="12" cy="12" r="11" fill="#6e2d91" stroke="#ddd" strokeWidth="1.500" /><path d="M6 6l3.500 1.500h5L18 6v5q1 6-6 6.500-7-.5-6-6.500z" fill="#f1eef3" /></svg></TaskSlot>
    <TaskSlot open><svg width="23" height="23" viewBox="0 0 23 23"><path d="M12 3h10.500v17H12z" fill="#fff" stroke="#d24726" /><circle cx="17" cy="9" r="3" fill="#d24726" /><path d="M14 14h7M14 17h7" stroke="#d24726" /><path d="M0 2.500L13 0v23L0 20.500z" fill="#d24726" /><text x="6.700" y="16" fontSize="13" fontWeight="700" textAnchor="middle" fill="#fff" fontFamily="Open Sans, sans-serif">P</text></svg></TaskSlot>
    <TaskSlot open><svg width="24" height="24" viewBox="0 0 24 24"><path d="M18 0l6 2.500v19L18 24 0 19l18 1.500z" fill="#865fc5" /><path d="M1 6.500l1.500-.8L6 8.500l5.500-5 3 1.300v11l-3 1.200L6 12l-3.500 2.700L1 14zM3 8.500v3.500l2-1.700zM8 10.300l3.500 2.800V7.500z" fill="#865fc5" fillRule="evenodd" /></svg></TaskSlot>
    <TaskSlot open><svg width="24" height="24" viewBox="0 0 24 24"><path d="M1 1h20v17H1z" fill="#3f4244" /><path d="M1 1h20v2H1z" fill="#1d8ad6" /><path d="M4 7h5M4 10h8M4 13h3" stroke="#4d8a3d" strokeWidth="1.500" /><path d="M12 14V10q0-2 3-2t3 2v4h-5q-1.500.5-1.500 3H10q-2-1-1.500-3.500T12 13z" fill="#3d7bb0" /><path d="M18 13h2q2.500 0 2.500 3.500T20 20h-1.500v1.500q-.5 2-3 2t-3-2V18q.5-1.500 2-1.500h2.500q1.200-.5 1-3.500z" fill="#ffd94a" /></svg></TaskSlot>
    <svg className="ml-auto" width="96" height="40" viewBox="1112 728 96 40" fill="none" stroke="#fff" strokeWidth="1.400">
      <path d="M1117.500 751l5-5.500 5 5.500" />
      <path d="M1140.500 744.500h13v8h-13zM1154.500 746.500v4" /><path d="M1142 746h7v5h-7z" fill="#fff" stroke="none" />
      <path d="M1167 752.500q2-8 11-9M1170 754q1.500-6 8-7.500M1173 754.500q1-4 5-5" /><circle cx="1176.500" cy="753.500" r="1.200" fill="#fff" stroke="none" />
      <path d="M1187.500 745.500h3l3.500-3.500v12l-3.500-3.500h-3z" /><path d="M1196 745.500q1.500 2.500 0 5" /><path d="M1198.500 743.500q2.500 4.500 0 9M1201 742q3.500 6 0 12" stroke="#888" />
    </svg>
    <span className="ml-[5px] w-[36px] text-[12px] tracking-[-0.500px]">ENG</span>
    <div className="-ml-px mr-px w-[60px] text-center text-[12px] leading-[18px] tracking-[-0.520px]"><div>11:23</div><div>12/01/2018</div></div>
    <svg className="ml-[16px]" width="40" height="40" viewBox="1325 728 40 40">
      <path d="M1325 740h16v13h-10l-3 3v-3h-3z" fill="#fff" /><path d="M1328 743.500h10M1328 746.500h10M1328 749.500h7" stroke="#111" />
      <circle cx="1340.500" cy="755.500" r="8" fill="#222" stroke="#777" /><text x="1340.500" y="760" fontSize="11.500" fontWeight="600" fill="#fff" textAnchor="middle">5</text>
      <path d="M1361.500 728v40" stroke="#444" />
    </svg>
  </div>
);

export default function App() {
  return (
    <div className="flex h-[768px] w-[1365px] flex-col overflow-hidden bg-white font-['Open_Sans','Noto_Sans',sans-serif]">
      <TabStrip />
      <Toolbar />
      <Bookmarks />
      <Page />
      <Taskbar />
    </div>
  );
}
